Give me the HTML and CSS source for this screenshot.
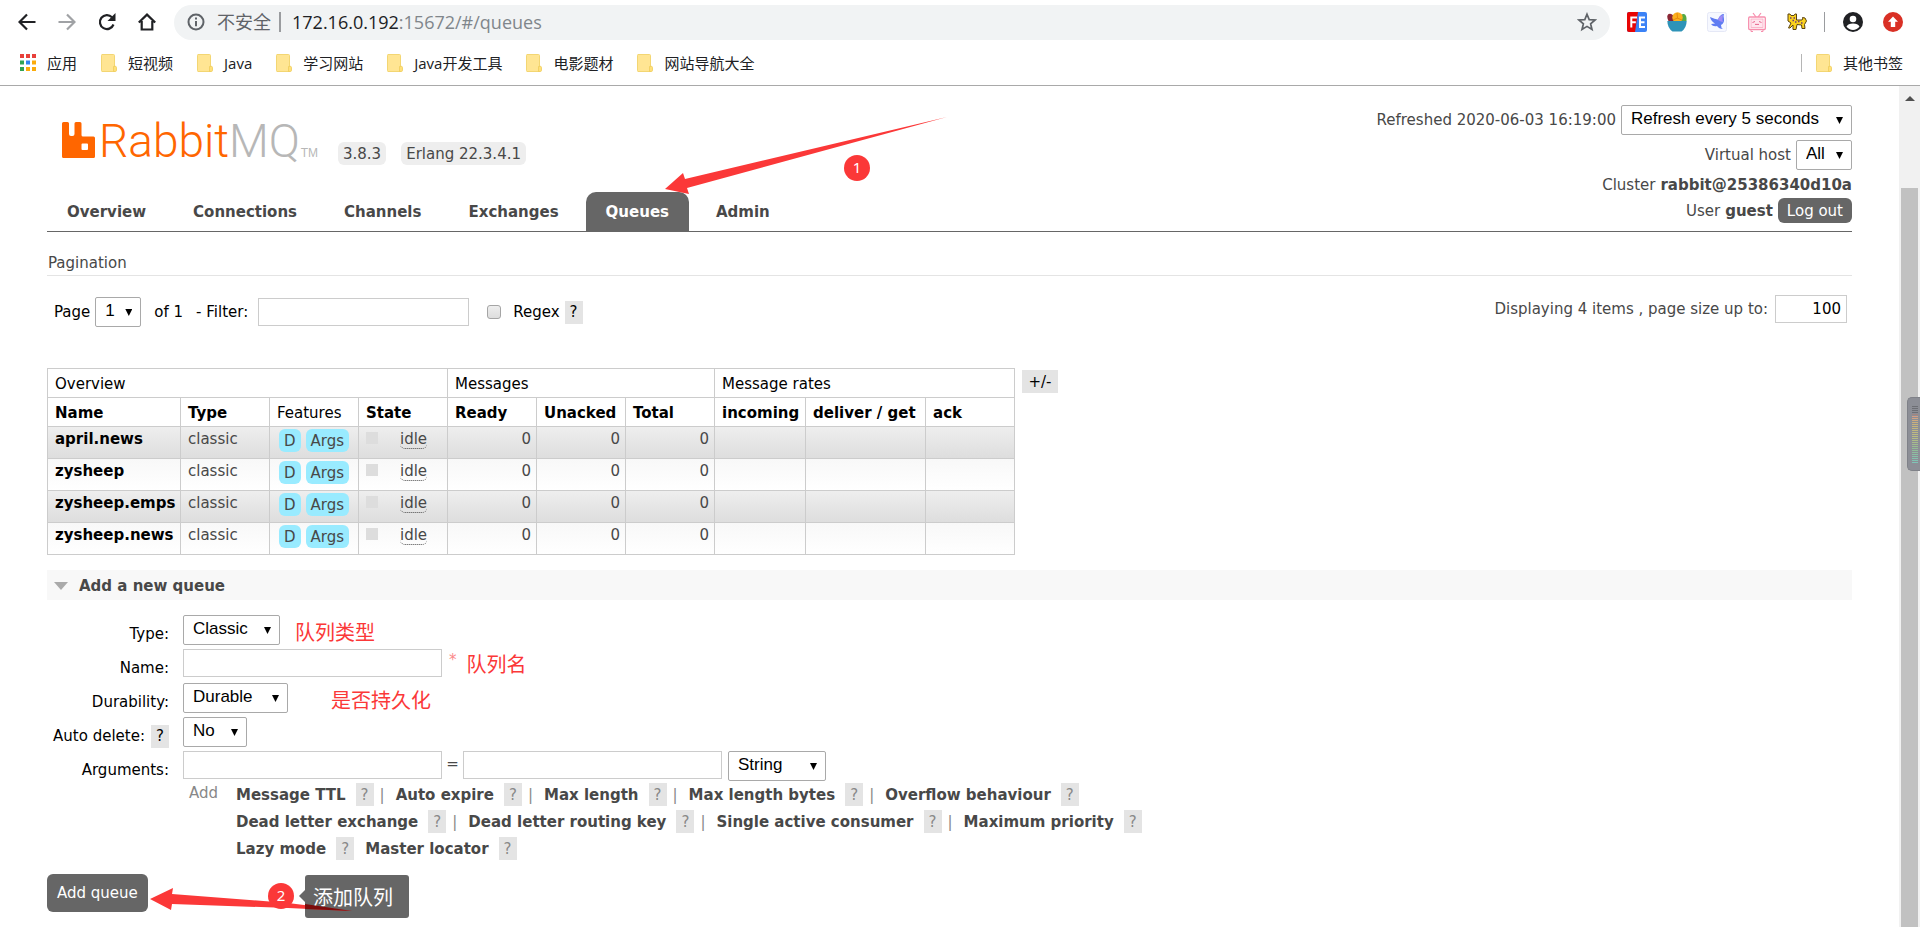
FILE: index.html
```html
<!DOCTYPE html>
<html lang="zh-CN">
<head>
<meta charset="utf-8">
<title>RabbitMQ Management</title>
<link rel="stylesheet" href="styles.css">
</head>
<body>
<svg class="defs" aria-hidden="true">
  <symbol id="folder" viewBox="0 0 16 18">
    <path d="M1 .5h11.500q1 0 1 1v16H1q-.5 0-.5-1v-15q0-1 .5-1z" fill="#ffe593" stroke="#f3d673"/>
    <path d="M12.500 12.500q3-1 3 1v3q0 1-1.500 1h-1.500z" fill="#ffe07a" stroke="#efcd5c" stroke-width=".8"/>
  </symbol>
</svg>

<div class="browser">
  <div class="toolbar">
    <button class="nav-btn" aria-label="Back"><svg viewBox="0 0 18 18"><path d="M17.500 9H2M9 1.500 1.500 9 9 16.500" fill="none" stroke="#202124" stroke-width="2.200"/></svg></button>
    <button class="nav-btn" aria-label="Forward"><svg viewBox="0 0 18 18"><path d="M.5 9H16M9 1.500 16.500 9 9 16.500" fill="none" stroke="#a0a2a5" stroke-width="2.200"/></svg></button>
    <button class="nav-btn" aria-label="Reload"><svg viewBox="0 0 18 18"><path d="M15.500 11.500A7 7 0 1 1 14 4.200" fill="none" stroke="#202124" stroke-width="2.200"/><path d="M17.500 0v8h-8z" fill="#202124"/></svg></button>
    <button class="nav-btn" aria-label="Home"><svg viewBox="0 0 18 18"><path d="M.8 9.500 9 1.600l8.200 7.900M3.700 8v8.500h10.600V8" fill="none" stroke="#202124" stroke-width="2.200"/></svg></button>
    <div class="omnibox">
      <svg class="info" viewBox="0 0 18 18"><circle cx="9" cy="9" r="7.500" fill="none" stroke="#5f6368" stroke-width="2"/><path d="M9 8v5.200M9 4.600v2" stroke="#5f6368" stroke-width="2"/></svg>
      <span class="insecure">不安全</span><span class="bar"></span>
      <span class="url">172.16.0.192<span class="path">:15672/#/queues</span></span>
      <button class="star" aria-label="Bookmark"><svg viewBox="0 0 20 20"><path d="m10 2.200 2.200 5.400 5.800.4-4.400 3.800 1.400 5.700L10 14.400l-5 3.100 1.400-5.700L2 8l5.800-.4z" fill="none" stroke="#5f6368" stroke-width="1.700"/></svg></button>
    </div>
    <div class="extensions">
      <svg viewBox="0 0 20 20"><rect width="20" height="20" rx="2" fill="#3b82f6"/><path d="M2 0h9L8 20H2q-2 0-2-2V2q0-2 2-2z" fill="#e80505"/><path d="M4.300 15.500V5.500H10M4.300 10.300h4.500M18 5.500h-5v9.500h5M13 10.300h4.500" fill="none" stroke="#fff" stroke-width="2"/></svg>
      <svg viewBox="0 0 20 20"><path d="M1.500 9Q-1 4 1.500 2 6 0 9 9z" fill="#8a2735"/><path d="M11 9q2-8 6-7 3 1 2.500 7z" fill="#56a944"/><circle cx="10.500" cy="5.500" r="5.200" fill="#fbb01f"/><path d="m10 1 .5 5L6 8M10 6l5 2" stroke="#e78a0b" fill="none"/><path d="M.3 9h19.400q-.2 7-5.200 10.500h-9Q.5 16 .3 9z" fill="#2e93b8"/></svg>
      <svg viewBox="0 0 20 20"><rect x=".5" y=".5" width="19" height="19" rx="2" fill="#f6f8ff" stroke="#e5e8f6"/><path d="M3 5q5 2 8 2.500Q13 2 17 2q-1 2 0 5 .5 4-3 6 0 3 2 4-4 0-6-3-4 1-6-2l4-.5Q4 9 3 5z" fill="#5f7cf2"/><path d="M11 8q1-4 5-5-1 5 0 7-2 0-5-2z" fill="#a18bf5"/></svg>
      <svg viewBox="0 0 20 20"><path d="M6 1l3 4M14 1l-3 4" stroke="#f78ead" stroke-width="1.200"/><rect x="1.700" y="5" width="16.600" height="12.500" rx="1" fill="#fff" stroke="#f78ead" stroke-width="1.300"/><rect x="4" y="7" width="12" height="8.500" fill="#ffe6ee" stroke="#f9a9c0" stroke-width=".8"/><path d="M5.500 10.500 8 9.500m4 0 2.500 1M8 12q1 1.500 2 0 1 1.500 2 0" stroke="#e8658d" fill="none"/><path d="M4 18v1.500h2M16 18v1.500h-2" stroke="#f78ead" fill="none"/></svg>
      <svg viewBox="0 0 20 20"><path d="M1 2h2l1 1.500h3L8 2h1.500v6H15q1-1 .5-2.500L18 6l1.500 3-2 3.500.5 4h-3l-.5-3.500-4.500-.5-1 5H6v-4.500L3 16H1.500L4 11 1 9z" fill="#fbd21e" stroke="#5a4210"/><path d="M3 6h1.500M6.500 6H8M8 10h1.500M11 9.500h1.500M14 11h1.500M5.500 8.500H7" stroke="#6b3d78" stroke-width="1.400"/></svg>
      <span class="bar tall"></span>
      <svg viewBox="0 0 20 20"><circle cx="10" cy="10" r="10" fill="#202124"/><circle cx="10" cy="7" r="3.300" fill="#fff"/><path d="M3.500 14.600q1.500-3 6.500-3t6.500 3q-2.500 3.400-6.500 3.400t-6.500-3.400z" fill="#fff"/></svg>
      <svg viewBox="0 0 20 20"><circle cx="10" cy="10" r="10" fill="#d93025"/><path d="m10 4.500 5 5.300h-2.800V15H7.800V9.800H5z" fill="#fff"/></svg>
    </div>
  </div>
  <nav class="bookmarks">
    <a href="#"><svg class="apps" viewBox="0 0 16 17"><path d="M0 0h4v4H0zM6 0h4v4H6zM12 0h4v4h-4z" fill="#e8403a"/><path d="M0 6.500h4v4H0zM0 13h4v4H0z" fill="#31a354"/><path d="M6 6.500h4v4H6z" fill="#3284f0"/><path d="M12 6.500h4v4h-4zM6 13h4v4H6zM12 13h4v4h-4z" fill="#fbab0b"/></svg>应用</a>
    <a href="#"><svg class="folder"><use href="#folder"/></svg>短视频</a>
    <a href="#"><svg class="folder"><use href="#folder"/></svg>Java</a>
    <a href="#"><svg class="folder"><use href="#folder"/></svg>学习网站</a>
    <a href="#"><svg class="folder"><use href="#folder"/></svg>Java开发工具</a>
    <a href="#"><svg class="folder"><use href="#folder"/></svg>电影题材</a>
    <a href="#"><svg class="folder"><use href="#folder"/></svg>网站导航大全</a>
    <a href="#" class="other"><svg class="folder"><use href="#folder"/></svg>其他书签</a>
  </nav>
</div>

<div class="viewport">
  <div class="page">
    <header class="header">
      <div class="brand-col">
        <div class="brand">
          <a href="#" class="logo" aria-label="RabbitMQ">
            <svg class="mark" viewBox="0 0 33 36"><path d="M1.500 0h4Q7 0 7 1.500V12q0 2 2 2h1.500q2 0 2-2V1.500Q12.500 0 14 0h4q1.500 0 1.500 1.500V13q0 1.500 1.500 1.500h10.500q1.500 0 1.500 1.500v18.500q0 1.500-1.500 1.500h-30Q0 36 0 34.500v-33Q0 0 1.500 0zM20.500 21.500q-1 0-1 1V27q0 1 1 1H25q1 0 1-1v-4.500q0-1-1-1z" fill="#f60" fill-rule="evenodd"/></svg>
            <span class="word">Rabbit<span class="mq">MQ</span></span><span class="tm">TM</span>
          </a>
          <span class="version">3.8.3</span>
          <span class="version">Erlang 22.3.4.1</span>
        </div>
        <nav class="tabs">
          <a href="#">Overview</a><a href="#">Connections</a><a href="#">Channels</a><a href="#">Exchanges</a><a href="#" class="selected">Queues</a><a href="#">Admin</a>
        </nav>
      </div>
      <div class="status">
        <div class="line"><label for="refresh">Refreshed 2020-06-03 16:19:00</label><span class="pick w-refresh"><select id="refresh"><option>Refresh every 5 seconds</option></select></span></div>
        <div class="line"><label for="vhost">Virtual host</label><span class="pick w-all"><select id="vhost"><option>All</option></select></span></div>
        <div class="line cluster">Cluster <b>rabbit@25386340d10a</b></div>
        <div class="line">User <b>guest</b><button class="logout">Log out</button></div>
      </div>
    </header>

    <main>
      <h2 class="pagination-title">Pagination</h2>
      <div class="pager">
        <label for="pg">Page</label><span class="pick w-page"><select id="pg"><option>1</option></select></span>
        <span class="of">of 1</span>
        <label for="filter" class="filter-label">- Filter:</label><input type="text" id="filter" class="filter">
        <input type="checkbox" id="regex" class="check"><label for="regex">Regex</label><button class="help">?</button>
        <div class="display"><label for="size">Displaying 4 items , page size up to:</label><input type="text" id="size" class="size" value="100"></div>
      </div>

      <div class="queues">
        <table class="list">
          <colgroup><col class="c-name"><col span="6" class="c-std"><col class="c-in"><col class="c-get"><col class="c-std"></colgroup>
          <thead>
            <tr><th colspan="4">Overview</th><th colspan="3">Messages</th><th colspan="3">Message rates</th></tr>
            <tr class="cols"><th>Name</th><th>Type</th><th class="plain">Features</th><th>State</th><th>Ready</th><th>Unacked</th><th>Total</th><th>incoming</th><th>deliver / get</th><th>ack</th></tr>
          </thead>
          <tbody>
            <tr><td><a href="#">april.news</a></td><td>classic</td><td class="feat"><span class="tag">D</span><span class="tag">Args</span></td><td><span class="dot"></span><abbr>idle</abbr></td><td class="n">0</td><td class="n">0</td><td class="n">0</td><td></td><td></td><td></td></tr>
            <tr><td><a href="#">zysheep</a></td><td>classic</td><td class="feat"><span class="tag">D</span><span class="tag">Args</span></td><td><span class="dot"></span><abbr>idle</abbr></td><td class="n">0</td><td class="n">0</td><td class="n">0</td><td></td><td></td><td></td></tr>
            <tr><td><a href="#">zysheep.emps</a></td><td>classic</td><td class="feat"><span class="tag">D</span><span class="tag">Args</span></td><td><span class="dot"></span><abbr>idle</abbr></td><td class="n">0</td><td class="n">0</td><td class="n">0</td><td></td><td></td><td></td></tr>
            <tr><td><a href="#">zysheep.news</a></td><td>classic</td><td class="feat"><span class="tag">D</span><span class="tag">Args</span></td><td><span class="dot"></span><abbr>idle</abbr></td><td class="n">0</td><td class="n">0</td><td class="n">0</td><td></td><td></td><td></td></tr>
          </tbody>
        </table>
        <button class="columns-btn">+/-</button>
      </div>

      <h2 class="section-title"><svg viewBox="0 0 14 8"><path d="M0 0h14L7 8z" fill="#aaa"/></svg>Add a new queue</h2>
      <form class="form">
        <label for="type">Type:</label>
        <div class="field"><span class="pick w-classic"><select id="type"><option>Classic</option></select></span><span class="note near">队列类型</span></div>
        <label for="name">Name:</label>
        <div class="field"><input type="text" id="name" class="wide"><span class="req">*</span><span class="note">队列名</span></div>
        <label for="dur">Durability:</label>
        <div class="field"><span class="pick w-durable"><select id="dur"><option>Durable</option></select></span><span class="note far">是否持久化</span></div>
        <div class="label-help"><label for="auto">Auto delete:</label><button type="button" class="help">?</button></div>
        <div class="field"><span class="pick w-no"><select id="auto"><option>No</option></select></span></div>
        <label for="arg">Arguments:</label>
        <div class="field"><input type="text" id="arg" class="wide"><span class="eq">=</span><input type="text" class="wide" aria-label="Argument value"><span class="pick w-string"><select aria-label="Argument type"><option>String</option></select></span></div>
        <div class="args">
          <span class="add">Add</span>
          <div class="arg-list">
            <div class="arg-row"><a href="#">Message TTL</a><button type="button" class="help">?</button><i>|</i><a href="#">Auto expire</a><button type="button" class="help">?</button><i>|</i><a href="#">Max length</a><button type="button" class="help">?</button><i>|</i><a href="#">Max length bytes</a><button type="button" class="help">?</button><i>|</i><a href="#">Overflow behaviour</a><button type="button" class="help">?</button></div>
            <div class="arg-row"><a href="#">Dead letter exchange</a><button type="button" class="help">?</button><i>|</i><a href="#">Dead letter routing key</a><button type="button" class="help">?</button><i>|</i><a href="#">Single active consumer</a><button type="button" class="help">?</button><i>|</i><a href="#">Maximum priority</a><button type="button" class="help">?</button></div>
            <div class="arg-row"><a href="#">Lazy mode</a><button type="button" class="help">?</button><a href="#" class="after">Master locator</a><button type="button" class="help">?</button></div>
          </div>
        </div>
        <div class="submit">
          <button type="button" class="add-queue">Add queue</button>
          <span class="bubble">添加队列</span>
          <span class="badge badge-two">2</span>
          <svg class="arrow arrow-two" viewBox="0 0 202 24"><path d="M0 11 23 0l-1 6 116 9 64 8-64-3-116-4-1 6z" fill="#fb3838"/><path d="m155 16 47 7-47-2z" fill="#7d0c0c"/></svg>
        </div>
      </form>
    </main>

    <svg class="arrow arrow-one" viewBox="0 0 282 77"><path d="M0 72 18 56l2 6L282 0 22 71l2 6z" fill="#fb3838"/></svg>
    <span class="badge badge-one">1</span>
  </div>

  <div class="scrollbar">
    <svg viewBox="0 0 10 5"><path d="M0 5 5 0l5 5z" fill="#505050"/></svg>
    <span class="thumb"></span>
    <span class="meter"></span>
  </div>
</div>
</body>
</html>
```

FILE: styles.css
```css
* { box-sizing: border-box; }
body {
  margin: 0;
  min-height: 100vh;
  display: flex;
  flex-direction: column;
  background: #fff;
  color: #484848;
  font: 15px/18px Verdana, "DejaVu Sans", "Noto Sans CJK SC", sans-serif;
}
a { color: inherit; text-decoration: none; }
button { font: inherit; border: 0; padding: 0; background: none; color: inherit; }
.defs { position: absolute; width: 0; height: 0; }

/* browser bars */
.browser { border-bottom: 1px solid #a9a9a9; font-family: "Open Sans", "Noto Sans CJK SC", sans-serif; }
.toolbar { height: 44px; display: flex; align-items: center; padding: 0 17px 0 18px; }
.nav-btn { width: 18px; height: 18px; margin-right: 22px; }
.nav-btn svg { display: block; }
.nav-btn:nth-of-type(4) { margin-right: 18px; }
.omnibox {
  flex: 1;
  height: 35px;
  border-radius: 18px;
  background: #f1f3f4;
  display: flex;
  align-items: center;
  padding: 0 13px;
  font-size: 18px;
  line-height: 24px;
}
.info { width: 18px; height: 18px; margin-right: 12px; }
.insecure { color: #5f6368; }
.bar { width: 2px; height: 20px; background: #9a9c9f; margin: 0 11px 0 8px; }
.url { color: #202124; }
.path { color: #80868b; }
.star { width: 20px; height: 20px; margin-left: auto; }
.star svg { display: block; }
.extensions { display: flex; align-items: center; gap: 20px; margin-left: 17px; }
.extensions svg { width: 20px; height: 20px; }
.extensions .tall { width: 1px; margin: 0 -2px 0 -3px; }
.bookmarks { height: 41px; display: flex; align-items: center; gap: 24px; padding: 0 17px 4px 20px; color: #202124; }
.bookmarks a { display: flex; align-items: center; gap: 11px; }
.apps { width: 16px; height: 17px; }
.folder { width: 16px; height: 18px; }
.bookmarks .other { margin-left: auto; padding-left: 14px; border-left: 1px solid #b5b5b5; }

/* page frame */
.viewport { flex: 1; display: flex; }
.page { flex: 1; position: relative; padding: 0 47px; }
.scrollbar { position: relative; width: 21px; background: #f1f1f1; display: flex; flex-direction: column; align-items: center; padding: 10px 2px 0; }
.scrollbar svg { width: 10px; height: 5px; margin-bottom: 87px; }
.thumb { flex: 1; align-self: stretch; background: #c1c1c1; }
.meter {
  position: absolute;
  right: 0;
  top: 311px;
  width: 13px;
  height: 74px;
  border: 1px solid #7f8188;
  border-right: 0;
  border-radius: 5px 0 0 5px;
  background: #8c8e96;
}
.meter::after {
  content: "";
  position: absolute;
  left: 4px;
  top: 8px;
  width: 6px;
  height: 57px;
  background: repeating-linear-gradient(#0000 0 1px, #8c8e96 1px 2px), linear-gradient(#6c6e74 0 8px, #d99a88 9px, #c9b27b 30%, #b9bd83 55%, #93bd94 75%, #7fc4b8);
}

/* header */
.header { display: flex; justify-content: space-between; border-bottom: 1px solid #666; }
.brand-col { display: flex; flex-direction: column; justify-content: space-between; }
.brand { display: flex; align-items: flex-end; padding: 36px 0 0 15px; }
.logo { display: flex; align-items: flex-end; width: 256px; height: 36px; margin-right: 20px; }
.mark { width: 33px; height: 36px; margin-right: 4px; }
.word { font: 300 46px/34px "Roboto", sans-serif; color: #f60; }
.mq, .tm { color: #b7b7b7; }
.tm { font: 12px/10px "Liberation Sans", sans-serif; margin-left: auto; }
.version { height: 23px; margin: 0 15px -7px 0; padding: 3px 5px; border-radius: 6px; background: #eee; }
.tabs { display: flex; gap: 7px; font-weight: bold; }
.tabs a { padding: 11px 20px 10px; border-radius: 10px 10px 0 0; }
.tabs .selected { background: #666; color: #fff; }
.status { padding: 19px 0 8px; display: flex; flex-direction: column; align-items: flex-end; }
.line { display: flex; align-items: center; gap: 5px; }
.line + .line { margin-top: 5px; }
.status .cluster { height: 28px; margin-top: 0; padding-top: 2px; }
.status .cluster + .line { margin-top: 0; }
.logout { height: 25px; padding: 0 9px; border-radius: 6px; background: #666; color: #fff; }

/* controls */
.pick { position: relative; display: inline-block; height: 30px; }
.pick::after { content: ""; position: absolute; right: 9px; top: 12px; width: 7px; height: 7px; background: #000; clip-path: polygon(0 0, 100% 0, 50% 100%); pointer-events: none; }
select {
  appearance: none;
  width: 100%;
  height: 30px;
  border: 1px solid #a9a9a9;
  border-radius: 2px;
  background: #fff;
  color: #000;
  padding: 0 0 2px 9px;
  font: 17px/24px Arial, "Liberation Sans", sans-serif;
}
.w-refresh { width: 231px; }
.w-all { width: 56px; }
.w-page { width: 46px; }
.w-classic { width: 97px; }
.w-durable { width: 105px; }
.w-no { width: 64px; }
.w-string { width: 98px; margin-left: 6px; }
input[type="text"] { height: 28px; border: 1px solid #ccc; padding: 0 5px; font: inherit; color: #000; background: #fff; }
.help { width: 18px; height: 23px; background: #e4e4e4; }

/* pagination */
.pagination-title { margin: 22px 0 0; padding: 0 1px 3px; border-bottom: 1px solid #e4e4e4; font-size: 15px; font-weight: normal; }
.pager { display: flex; align-items: center; padding: 19px 5px 0 7px; color: #000; min-height: 53px; }
.pager label { margin-right: 5px; }
.pager .of { margin: 0 13px; }
.pager .filter-label { margin-right: 10px; }
.filter { width: 211px; margin-right: 18px; }
.check { appearance: none; width: 14px; height: 14px; margin: 0 12px 0 0; border: 1px solid #a5a5a5; border-radius: 3px; background: linear-gradient(#eee, #ddd); }
.display { margin-left: auto; padding-bottom: 6px; display: flex; align-items: center; color: #484848; }
.pager .display label { margin-right: 7px; }
.size { width: 72px; text-align: right; }

/* queue table */
.queues { display: flex; align-items: flex-start; gap: 7px; margin-top: 39px; }
.list { width: 968px; table-layout: fixed; border-collapse: collapse; }
.list th, .list td { border: 1px solid #ccc; padding: 0 7px; text-align: left; white-space: nowrap; }
.list th { height: 29px; padding-top: 2px; color: #000; font-weight: normal; }
.list .cols th { font-weight: bold; }
.list .cols .plain { font-weight: normal; }
.list td { height: 32px; vertical-align: top; padding-top: 3px; }
.list td a { color: #000; font-weight: bold; }
.list tbody tr:nth-child(odd) { background: linear-gradient(#eee, #ddd); }
.list tbody tr:nth-child(even) { background: linear-gradient(#f8f8f8, #fff); }
.c-name { width: 133px; }
.c-std { width: 89px; }
.c-in { width: 91px; }
.c-get { width: 120px; }
.list .n { text-align: right; padding-right: 5px; }
.list .feat { padding: 2px 9px 0; }
.tag { display: inline-block; height: 23px; padding: 3px 5px 0; border-radius: 6px; background: #99ebff; }
.tag + .tag { margin-left: 5px; }
.dot { display: inline-block; width: 12px; height: 12px; margin-right: 22px; background: #ddd; }
abbr { display: inline-block; line-height: 17px; border-bottom: 1px dotted #484848; border-radius: 5px; }
.columns-btn { width: 36px; height: 23px; margin-top: 2px; background: #e4e4e4; color: #000; }

/* add queue */
.section-title { display: flex; align-items: center; gap: 11px; height: 30px; margin: 15px 0; padding: 1px 7px 0; background: #f8f8f8; font-size: 15px; }
.section-title svg { width: 14px; height: 8px; }
.form { display: grid; grid-template-columns: 122px 1fr; column-gap: 14px; grid-auto-rows: min-content; color: #000; }
.form > label, .label-help { height: 34px; padding-top: 10px; text-align: right; }
.form .label-help { display: flex; justify-content: flex-end; align-items: center; gap: 6px; padding-top: 4px; }
.field { height: 34px; display: flex; align-items: flex-start; }
.field .wide { width: 259px; }
.note { margin-left: 10px; color: #fb3838; font-family: "Noto Sans CJK SC", sans-serif; font-size: 20px; line-height: 30px; }
.near { margin-left: 15px; padding-top: 2px; }
.far { margin-left: 43px; padding-top: 2px; }
.req { margin: 2px 0 0 7px; color: #fb8888; }
.eq { width: 21px; text-align: center; padding-top: 4px; color: #484848; }
.args { grid-column: 2; display: flex; padding-left: 6px; margin-top: -1px; color: #888; }
.add { width: 47px; }
.arg-list { margin-top: -3px; }
.arg-row { display: flex; align-items: center; height: 27px; }
.arg-row a { font-weight: bold; color: #484848; }
.arg-row .help { margin-left: 10px; }
.arg-row i { font-style: normal; margin: 0 11px 0 6px; }
.arg-row .after { margin-left: 11px; }
.submit { grid-column: 1 / -1; position: relative; padding: 12px 0 15px; }
.add-queue { height: 38px; padding: 0 10px; border-radius: 6px; background: #666; color: #fff; }

/* callouts */
.badge { position: absolute; width: 26px; height: 26px; border-radius: 50%; background: #fb3838; color: #fff; text-align: center; font-family: "Noto Sans", sans-serif; line-height: 25px; }
.badge-one { left: 844px; top: 69px; }
.badge-two { left: 221px; top: 21px; }
.arrow { position: absolute; pointer-events: none; }
.arrow-one { left: 665px; top: 31px; width: 282px; height: 77px; }
.arrow-two { left: 103px; top: 26px; width: 202px; height: 24px; }
.bubble { position: absolute; left: 258px; top: 13px; height: 43px; padding: 6px 16px 0 8px; border-radius: 3px; background: #666; color: #fff; font-family: "Noto Sans CJK SC", sans-serif; font-size: 20px; line-height: 32px; }
.bubble::before { content: ""; position: absolute; left: -6px; top: 15px; border: 6px solid transparent; border-left: 0; border-right-color: #666; }
```
